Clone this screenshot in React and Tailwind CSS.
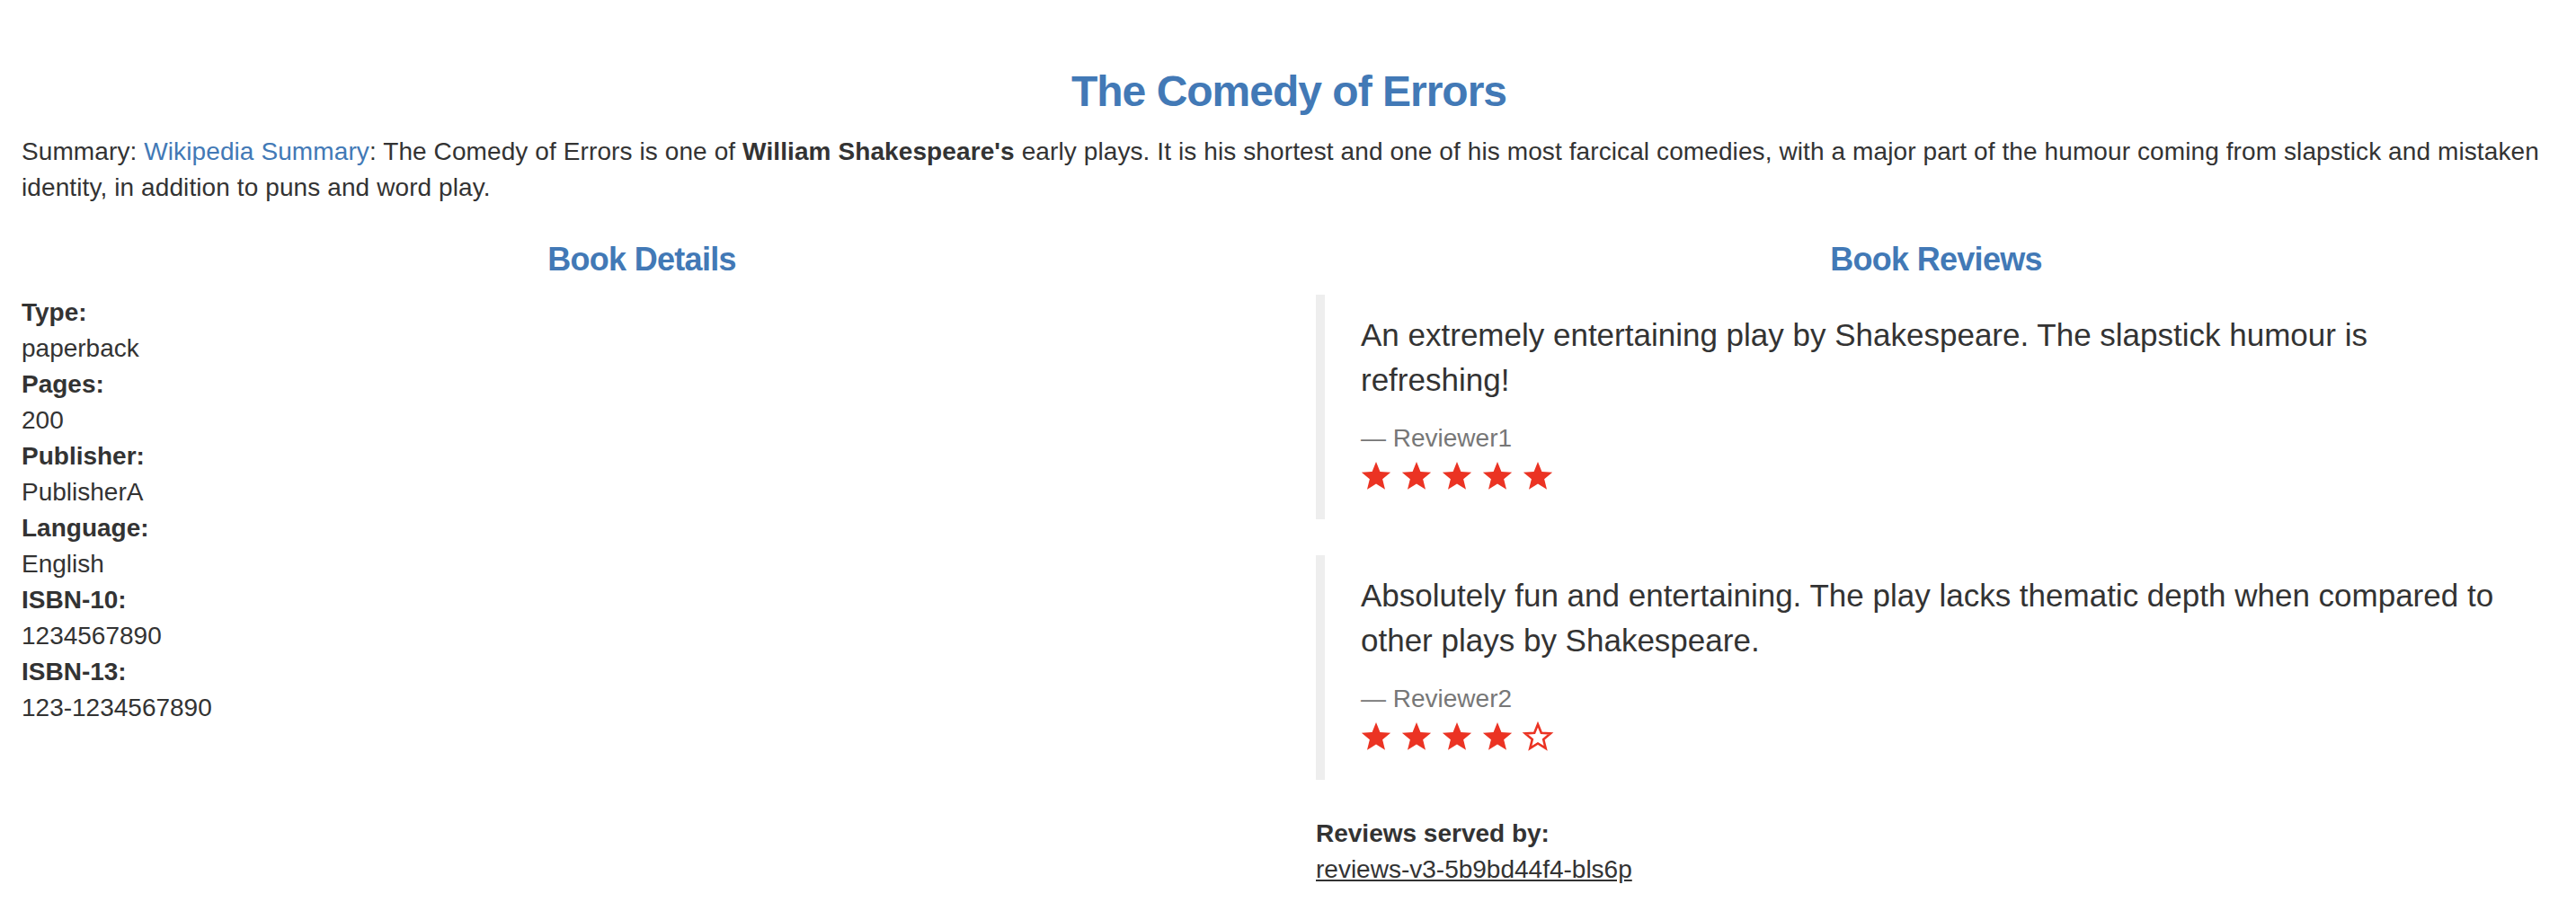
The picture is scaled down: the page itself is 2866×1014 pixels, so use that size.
import React from "react";

const reviews = [
    {
        text: "An extremely entertaining play by Shakespeare. The slapstick humour is refreshing!",
        reviewer: "Reviewer1",
        stars: 5,
    },
    {
        text: "Absolutely fun and entertaining. The play lacks thematic depth when compared to other plays by Shakespeare.",
        reviewer: "Reviewer2",
        stars: 4,
    },
];

const details = [
    ["Type:", "paperback"],
    ["Pages:", "200"],
    ["Publisher:", "PublisherA"],
    ["Language:", "English"],
    ["ISBN-10:", "1234567890"],
    ["ISBN-13:", "123-1234567890"],
];

const STAR_POINTS =
    "17,0 21.41,10.93 33.17,11.75 24.13,19.32 27,30.75 17,24.5 7,30.75 9.87,19.32 0.83,11.75 12.59,10.93";

const Star = ({ filled }) => (
    <svg width="34" height="31" viewBox="0 0 34 31" className="overflow-visible">
        {filled ? (
            <polygon points={STAR_POINTS} fill="#eb3323" />
        ) : (
            <polygon
                points={STAR_POINTS}
                fill="#ffffff"
                stroke="#eb3323"
                strokeWidth="3"
                strokeLinejoin="miter"
                transform="translate(2.2 2.2) scale(0.87)"
            />
        )}
    </svg>
);

const Review = ({ review }) => (
    <blockquote className="border-l-[10px] border-[#eeeeee] px-[40px] py-[20px] mb-[40px] text-[35px] leading-[50px]">
        <p className="mb-[20px]">{review.text}</p>
        <footer className="text-[28px] leading-[40px] text-[#777777]">
            &mdash;&nbsp;{review.reviewer}
        </footer>
        <div className="flex items-start gap-[11px] h-[50px] pt-[6px]">
            {[0, 1, 2, 3, 4].map((i) => (
                <Star key={i} filled={i < review.stars} />
            ))}
        </div>
    </blockquote>
);

export default function App() {
    return (
        <div className="min-h-screen bg-white text-[#333333] font-['Liberation_Sans',Arial,sans-serif] text-[28px] leading-[40px] pl-[24px] pr-[22px]">
            {/* Title + summary */}
            <h3 className="pt-[76px] mb-[20px] text-center text-[48px] leading-[52.8px] font-bold tracking-[-1px] text-[#4279b6]">
                The Comedy of Errors
            </h3>
            <p className="mb-[20px] tracking-[0.1px]">
                Summary: <a className="text-[#4279b6]">Wikipedia Summary</a>: The Comedy of Errors is one
                of <b>William Shakespeare's</b> early plays. It is his shortest and one of his most
                farcical comedies, with a major part of the humour coming from slapstick and mistaken
                identity, in addition to puns and word play.
            </p>

            <div className="grid grid-cols-2 gap-x-[60px]">
                {/* Book details */}
                <div>
                    <h4 className="mt-[20px] mb-[20px] text-center text-[36px] leading-[39.6px] font-bold tracking-[-0.7px] text-[#4279b6]">
                        Book Details
                    </h4>
                    <dl>
                        {details.map(([label, value]) => (
                            <React.Fragment key={label}>
                                <dt className="font-bold">{label}</dt>
                                <dd>{value}</dd>
                            </React.Fragment>
                        ))}
                    </dl>
                </div>

                {/* Book reviews */}
                <div>
                    <h4 className="mt-[20px] mb-[20px] text-center text-[36px] leading-[39.6px] font-bold tracking-[-0.7px] text-[#4279b6]">
                        Book Reviews
                    </h4>
                    {reviews.map((r) => (
                        <Review key={r.reviewer} review={r} />
                    ))}
                    <dl>
                        <dt className="font-bold">Reviews served by:</dt>
                        <u>reviews-v3-5b9bd44f4-bls6p</u>
                    </dl>
                </div>
            </div>
        </div>
    );
}
